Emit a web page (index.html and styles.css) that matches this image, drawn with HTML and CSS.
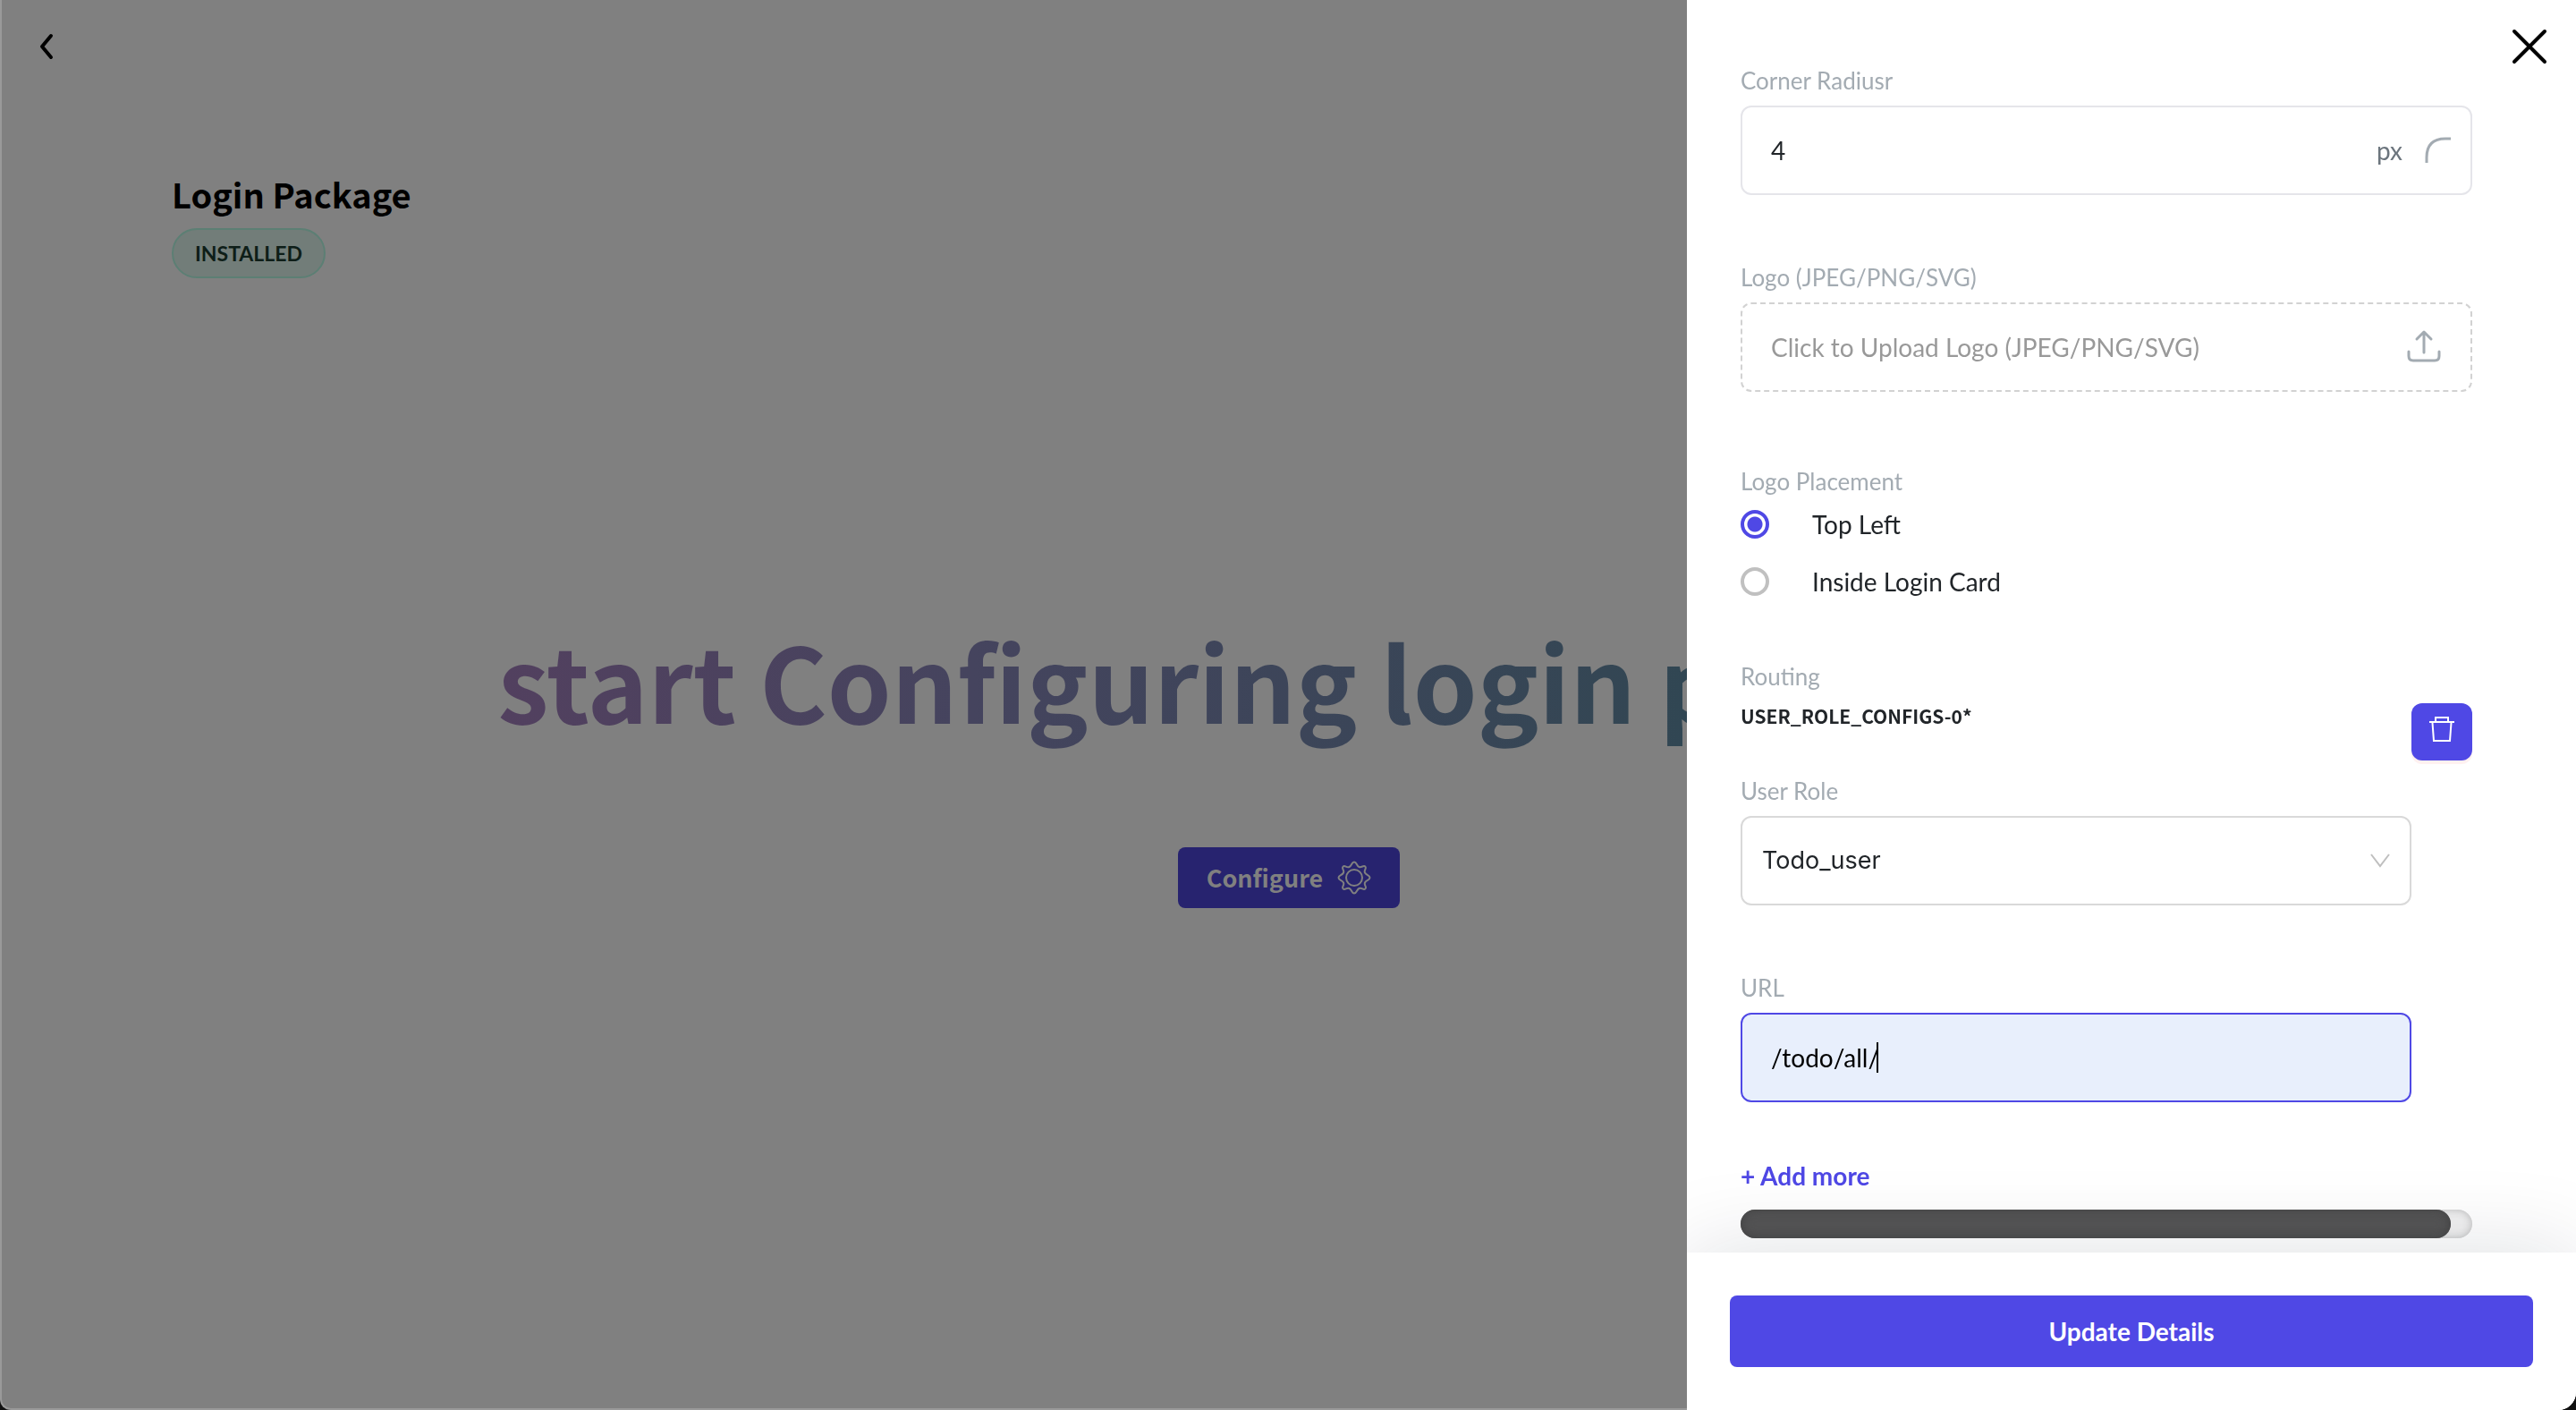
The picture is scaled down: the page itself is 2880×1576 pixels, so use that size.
FILE: index.html
```html
<!DOCTYPE html>
<html lang="en">
<head>
<meta charset="utf-8">
<title>Login Package</title>
<link rel="stylesheet" href="styles.css">
</head>
<body>
<main class="page">
  <button class="back" type="button" aria-label="Back">
    <svg width="20" height="34" viewBox="0 0 20 34"><path d="M15 5 5 17l10 12" fill="none" stroke="#000" stroke-width="4" stroke-linecap="round" stroke-linejoin="round"/></svg>
  </button>
  <header class="package">
    <h1 class="package-name">Login Package</h1>
    <span class="badge">INSTALLED</span>
  </header>
  <section class="intro">
    <h2 class="intro-title">start Configuring login package</h2>
    <button class="configure" type="button">Configure
      <svg width="38" height="38" viewBox="0 0 38 38" fill="none" stroke="#808080" stroke-width="2" stroke-linejoin="round"><path d="M19 1.500C22 1.500 21.500 6 24.500 7S29.500 4.500 31.400 6.600 29.500 10.500 31 13.500 36.500 16 36.500 19 32.300 21.500 31 24.500 33.500 29.300 31.400 31.400 27.500 29.500 24.500 31 22 36.500 19 36.500 16.500 32.300 13.500 31 8.700 33.500 6.600 31.400 8.500 27.500 7 24.500 1.500 22 1.500 19 5.700 16.500 7 13.500 4.500 8.700 6.600 6.600 10.500 8.500 13.500 7 16 1.500 19 1.500Z"/><circle cx="19" cy="19" r="9"/></svg>
    </button>
  </section>
</main>

<aside class="drawer">
  <button class="close" type="button" aria-label="Close">
    <svg width="40" height="40" viewBox="0 0 40 40"><path d="M3 3l34 34M37 3 3 37" stroke="#000" stroke-width="4" stroke-linecap="round"/></svg>
  </button>
  <form class="form" id="config-form">
    <div class="field">
      <label class="label" for="radius">Corner Radiusr</label>
      <div class="box">
        <input class="text" id="radius" type="text" value="4">
        <span class="unit">px</span>
        <svg width="32" height="32" viewBox="0 0 32 32"><path d="M3 30V24Q3 3 24 3H30" fill="none" stroke="#a3abb2" stroke-width="3"/></svg>
      </div>
    </div>
    <div class="field">
      <span class="label" id="logo-label">Logo (JPEG/PNG/SVG)</span>
      <button class="box upload" type="button" aria-describedby="logo-label">
        <span>Click to Upload Logo (JPEG/PNG/SVG)</span>
        <svg width="40" height="40" viewBox="0 0 40 40" fill="none" stroke="#a3abb2" stroke-width="3" stroke-linecap="round" stroke-linejoin="round"><path d="M20 26V4M12 11l8-8 8 8M3 25v5q0 5 5 5h24q5 0 5-5v-5"/></svg>
      </button>
    </div>
    <fieldset class="placement">
      <legend class="label">Logo Placement</legend>
      <label class="option"><input class="radio" type="radio" name="placement" checked>Top Left</label>
      <label class="option"><input class="radio" type="radio" name="placement">Inside Login Card</label>
    </fieldset>
    <section class="routing">
      <h3 class="label">Routing</h3>
      <div class="config-head">
        <h4 class="config-name">USER_ROLE_CONFIGS-0*</h4>
        <button class="trash" type="button" aria-label="Delete config">
          <svg width="28" height="36" viewBox="0 0 28 36" fill="none" stroke="#fff" stroke-width="2"><path d="M0 7H28M7 7V2h14v5M3.500 8l1.500 20h18L24.500 8"/></svg>
        </button>
      </div>
      <div class="config">
        <div class="field">
          <label class="label" for="role">User Role</label>
          <div class="box role">
            <select class="select" id="role"><option>Todo_user</option></select>
            <svg class="chevron" width="22" height="16" viewBox="0 0 22 16"><path d="M1 1l10 13L21 1" fill="none" stroke="#bfbfbf" stroke-width="2"/></svg>
          </div>
        </div>
        <div class="field">
          <label class="label" for="url">URL</label>
          <div class="box url">
            <input class="text" id="url" type="text" value="/todo/all/">
            <span class="caret"></span>
          </div>
        </div>
      </div>
      <button class="add" type="button">+ Add more</button>
      <div class="track"><div class="thumb"></div></div>
    </section>
  </form>
  <footer class="footer">
    <button class="update" type="submit" form="config-form">Update Details</button>
  </footer>
</aside>
</body>
</html>
```
FILE: styles.css
```css
* { box-sizing: border-box; }
html, body { height: 100%; }
body {
  margin: 0;
  overflow: hidden;
  background: #111;
  color: #212529;
  font: 28px/40px Lato, sans-serif;
}
button, input, select { font: inherit; color: inherit; }
button { border: 0; padding: 0; background: none; }
h1, h2, h3, h4 { margin: 0; }
svg { display: block; flex: none; }

.page {
  height: 100%;
  overflow: hidden;
  border-left: 2px solid #999;
  border-bottom: 2px solid #999;
  border-radius: 0 0 20px 12px;
  background: #808080;
}
.back { display: block; margin: 35px 0 0 40px; }
.package { padding: 116px 0 0 190px; }
.package-name {
  color: #000;
  font: 700 38px/64px "Noto Sans CJK SC", sans-serif;
}
.badge {
  display: inline-block;
  margin-top: 6px;
  padding: 0 24px;
  border: 2px solid #5c7f74;
  border-radius: 28px;
  background: #727d79;
  color: #0e1e18;
  font-size: 23px;
  line-height: 52px;
  font-weight: 700;
}
.intro {
  display: flex;
  flex-direction: column;
  align-items: center;
  padding-top: 368px;
}
.intro-title {
  font: 700 115px/160px "Noto Sans CJK SC", sans-serif;
  white-space: nowrap;
  background: linear-gradient(90deg, #52405f, #45445e 30%, #344654 70%, #20484e);
  background-clip: text;
  color: transparent;
}
.configure {
  display: flex;
  align-items: center;
  gap: 16px;
  height: 68px;
  margin-top: 108px;
  padding: 0 32px;
  border-radius: 8px;
  background: #27236f;
  color: #808080;
  font: 700 27px/40px "Noto Sans CJK SC", sans-serif;
}

.drawer {
  position: fixed;
  top: 0;
  right: 0;
  bottom: 0;
  display: flex;
  flex-direction: column;
  width: 994px;
  overflow: hidden;
  border-radius: 0 0 20px 0;
  background: #fff;
}
.close { position: absolute; top: 32px; right: 32px; }
.form { flex: 1; padding: 72px 116px 16px 60px; }
.field { display: flex; flex-direction: column; gap: 10px; margin-bottom: 74px; }
.label {
  padding: 0;
  color: #a3abb2;
  font-size: 26px;
  line-height: 36px;
  font-weight: 400;
}
.box {
  display: flex;
  align-items: center;
  height: 100px;
  padding: 0 20px 0 32px;
  border: 2px solid #e5e5ea;
  border-radius: 12px;
  background: #fff;
}
.text { flex: 1; min-width: 0; border: 0; padding: 0; background: none; outline: none; }
.unit { margin-right: 24px; color: #6c757d; }
.upload { justify-content: space-between; padding-right: 32px; border: 2px dashed #d2d2d2; color: #999; }
.placement { margin: 82px 0 56px; padding: 0; border: 0; }
.placement .label { margin-bottom: -2px; }
.option { display: flex; align-items: center; gap: 48px; height: 64px; }
.radio {
  appearance: none;
  width: 32px;
  height: 32px;
  margin: 0;
  border: 4px solid #c0c0c0;
  border-radius: 50%;
}
.radio:checked {
  border-color: #4f48e5;
  background: radial-gradient(circle, #4f48e5 8px, #fff 9px);
}
.config-head {
  display: flex;
  justify-content: space-between;
  align-items: flex-start;
  margin: 12px 0 16px;
}
.config-name { font: 700 21px/28px "Noto Sans CJK SC", sans-serif; }
.trash {
  display: flex;
  align-items: center;
  justify-content: center;
  width: 68px;
  height: 64px;
  border-radius: 12px;
  background: #4f48e5;
  box-shadow: 0 4px 0 #fff1f0;
}
.config { padding-right: 68px; }
.config .field:last-child { margin-bottom: 62px; }
.role { position: relative; padding: 0; border-color: #d9d9d9; }
.select {
  appearance: none;
  width: 100%;
  height: 96px;
  padding: 0 22px;
  border: 0;
  border-radius: 12px;
  background: none;
  font-family: Inter, sans-serif;
  font-size: 27px;
}
.chevron { position: absolute; right: 22px; pointer-events: none; }
.url { border-color: #4f48e5; background: #e8effc; color: #000; }
.url .text { flex: none; width: 118px; }
.caret { width: 2px; height: 34px; background: #000; }
.add { display: block; color: #4f48e5; font-weight: 700; }
.track {
  height: 32px;
  margin-top: 18px;
  border-radius: 16px;
  background: #f1f1f1;
  box-shadow: inset 0 0 10px #bbb;
}
.thumb {
  width: calc(100% - 24px);
  height: 100%;
  border-radius: 16px;
  background: #555;
  box-shadow: inset 0 0 12px #444;
}
.footer {
  position: relative;
  padding: 48px;
  background: #fff;
  box-shadow: 0 0 100px #0f172a22;
}
.update {
  width: 100%;
  height: 80px;
  border-radius: 8px;
  background: #4f48e5;
  color: #fff;
  font-weight: 700;
}
```
